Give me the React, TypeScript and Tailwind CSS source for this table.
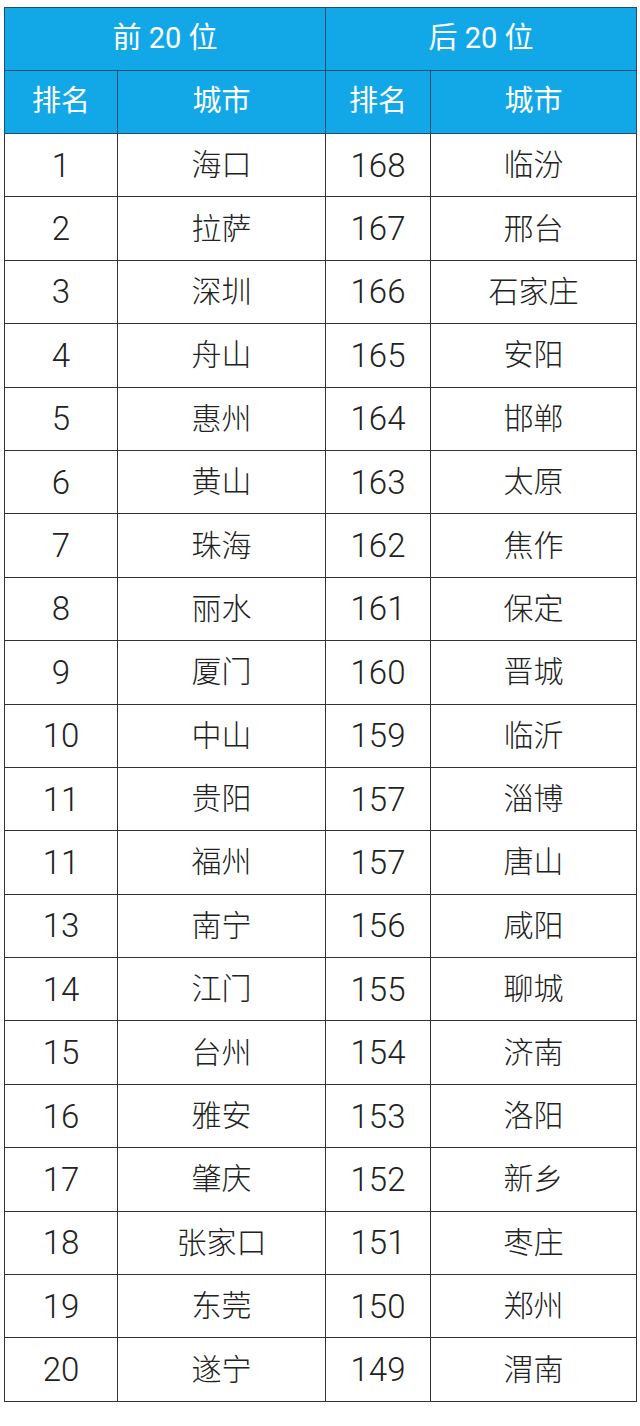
const rows: [string, string, string, string][] = [
  ["1", "海口", "168", "临汾"],
  ["2", "拉萨", "167", "邢台"],
  ["3", "深圳", "166", "石家庄"],
  ["4", "舟山", "165", "安阳"],
  ["5", "惠州", "164", "邯郸"],
  ["6", "黄山", "163", "太原"],
  ["7", "珠海", "162", "焦作"],
  ["8", "丽水", "161", "保定"],
  ["9", "厦门", "160", "晋城"],
  ["10", "中山", "159", "临沂"],
  ["11", "贵阳", "157", "淄博"],
  ["11", "福州", "157", "唐山"],
  ["13", "南宁", "156", "咸阳"],
  ["14", "江门", "155", "聊城"],
  ["15", "台州", "154", "济南"],
  ["16", "雅安", "153", "洛阳"],
  ["17", "肇庆", "152", "新乡"],
  ["18", "张家口", "151", "枣庄"],
  ["19", "东莞", "150", "郑州"],
  ["20", "遂宁", "149", "渭南"],
];

const font = { fontFamily: "Roboto, 'Noto Sans CJK SC', sans-serif" };

export default function App() {
  return (
    <div className="min-h-[1426px] bg-white pt-[7px] pl-[4px]" style={font}>
      <table className="table-fixed border-collapse font-light text-[#222]">
        <colgroup>
          <col className="w-[113px]" />
          <col className="w-[208px]" />
          <col className="w-[105px]" />
          <col className="w-[206px]" />
        </colgroup>
        <thead className="bg-[#12a8e8] text-white text-[29px]">
          <tr className="h-[63px]">
            <th colSpan={2} className="border border-[#1d4f73] font-normal">前 20 位</th>
            <th colSpan={2} className="border border-[#1d4f73] font-normal">后 20 位</th>
          </tr>
          <tr className="h-[63px]">
            <th className="border border-[#1d4f73] font-normal">排名</th>
            <th className="border border-[#1d4f73] font-normal">城市</th>
            <th className="border border-[#1d4f73] font-normal">排名</th>
            <th className="border border-[#1d4f73] font-normal">城市</th>
          </tr>
        </thead>
        <tbody>
          {rows.map((r, i) => (
            <tr key={i} className="h-[63.4px]">
              {r.map((c, j) => (
                <td
                  key={j}
                  className={
                    j % 2 === 0
                      ? "border border-[#333] p-0 text-center text-[33px] leading-none"
                      : "border border-[#333] p-0 text-center text-[30px] leading-none"
                  }
                >
                  {c}
                </td>
              ))}
            </tr>
          ))}
        </tbody>
      </table>
    </div>
  );
}
